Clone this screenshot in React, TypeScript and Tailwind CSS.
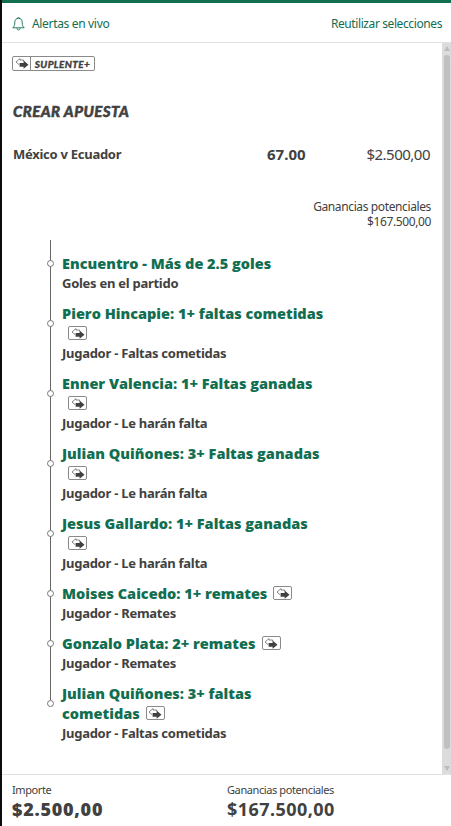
type Leg = {
    lines: string[];
    market: string;
    sub?: 'inline' | 'below';
};

const LEGS: Leg[] = [
    { lines: ['Encuentro - Más de 2.5 goles'], market: 'Goles en el partido' },
    { lines: ['Piero Hincapie: 1+ faltas cometidas'], market: 'Jugador - Faltas cometidas', sub: 'below' },
    { lines: ['Enner Valencia: 1+ Faltas ganadas'], market: 'Jugador - Le harán falta', sub: 'below' },
    { lines: ['Julian Quiñones: 3+ Faltas ganadas'], market: 'Jugador - Le harán falta', sub: 'below' },
    { lines: ['Jesus Gallardo: 1+ Faltas ganadas'], market: 'Jugador - Le harán falta', sub: 'below' },
    { lines: ['Moises Caicedo: 1+ remates'], market: 'Jugador - Remates', sub: 'inline' },
    { lines: ['Gonzalo Plata: 2+ remates'], market: 'Jugador - Remates', sub: 'inline' },
    { lines: ['Julian Quiñones: 3+ faltas', 'cometidas'], market: 'Jugador - Faltas cometidas', sub: 'inline' },
];

function SwapIcon() {
    return (
        <svg width="14" height="11" viewBox="0 0 14 11" className="block shrink-0">
            <path d="M8.6 3.2V2H5V.6L1 4l3 2.600" fill="none" stroke="#777" strokeWidth="0.9" />
            <path d="M4.600 4.900h4V2.600l4.900 4.100-4.900 4.100V8.700h-4z" fill="#414141" />
        </svg>
    );
}

function SubBadge() {
    return (
        <span className="ml-1.5 flex h-3.5 w-[19px] shrink-0 items-center justify-center rounded-[2px] border border-[#8a8a8a]">
            <SwapIcon />
        </span>
    );
}

function LegRow({ leg }: { leg: Leg }) {
    return (
        <li className="mb-2.5">
            <div className="relative font-['Open_Sans',sans-serif] text-[14.5px] leading-5 font-extrabold text-[#126e51]">
                <span className="absolute top-1/2 -left-[15px] -mt-[3px] h-[7px] w-[7px] rounded-full border border-[#777] bg-white" />
                {leg.lines.map((line, i) => (
                    <div key={line} className="flex h-5 items-center whitespace-nowrap">
                        <span className="pt-0.5">{line}</span>
                        {leg.sub === 'inline' && i === leg.lines.length - 1 && <SubBadge />}
                    </div>
                ))}
                {leg.sub === 'below' && (
                    <div className="flex h-5 items-center">
                        <SubBadge />
                    </div>
                )}
            </div>
            <p className="text-[13px] leading-5 font-bold tracking-[-0.27px]">{leg.market}</p>
        </li>
    );
}

export default function App() {
    return (
        <div className="flex h-[826px] w-[451px] flex-col overflow-hidden border-l-2 border-[#0c0c0c] bg-white font-['Noto_Sans','Open_Sans',sans-serif] text-[#414141]">
            {/* Header */}
            <header className="flex h-[43px] shrink-0 items-center justify-between border-t-3 border-b border-t-[#126e51] border-b-[#e2e2e2] pt-0.5 pr-[9px] pl-2.5 text-[12px] text-[#126e51]">
                <div className="flex items-center">
                    <svg width="13" height="14" viewBox="0 0 13 14" fill="none" stroke="#126e51" strokeWidth="0.9" className="mr-[7px]">
                        <path d="M5.4 1.6a1.1 1.1 0 0 1 2.2 0M6.5 1.3c-2.4 0-3.7 1.700-3.700 3.900 0 3.400-.8 4.300-2 5.600h11.400c-1.200-1.300-2-2.200-2-5.600 0-2.200-1.300-3.900-3.700-3.900z" />
                        <path d="M4.900 11.200c.2 2.400 3 2.400 3.200 0" />
                    </svg>
                    <span className="tracking-[-0.33px]">Alertas en vivo</span>
                </div>
                <span className="tracking-[-0.4px]">Reutilizar selecciones</span>
            </header>

            {/* Slip */}
            <div className="flex min-h-0 flex-1">
                <main className="min-w-0 flex-1 pt-[13px] pr-[11px] pl-[11px]">
                    <div className="-ml-px flex h-[15px] w-[83px] items-center rounded-[2px] border border-[#8a8a8a]">
                        <span className="flex h-full w-[18px] items-center justify-center border-r border-[#8a8a8a]">
                            <SwapIcon />
                        </span>
                        <span className="flex-1 text-center font-['Lato',sans-serif] text-[10px] leading-none font-black tracking-[0.35px] italic [-webkit-text-stroke:0.3px]">SUPLENTE+</span>
                    </div>

                    <h1 className="mt-[30px] font-['Lato',sans-serif] text-[15px] leading-5 font-black tracking-[0.45px] italic [-webkit-text-stroke:0.5px]">CREAR APUESTA</h1>

                    <div className="mt-[23px] flex h-5 items-center">
                        <span className="w-[254px] pt-0.5 text-[13px] font-bold tracking-[-0.27px]">México v Ecuador</span>
                        <span className="text-[15px] font-bold">67.00</span>
                        <span className="mr-px ml-auto text-[15px] tracking-[-0.5px]">$2.500,00</span>
                    </div>

                    <div className="mt-9 flex flex-col items-end gap-px text-[12px] leading-[14px] tracking-[-0.38px]">
                        <p>Ganancias potenciales</p>
                        <p>$167.500,00</p>
                    </div>

                    <div className="relative mt-[11px] ml-[37px] pt-[13px] pl-3">
                        <div className="absolute top-0 left-0 h-[460px] w-px bg-[#666]" />
                        <ul>
                            {LEGS.map((leg, i) => (
                                <LegRow key={i} leg={leg} />
                            ))}
                        </ul>
                    </div>
                </main>

                {/* Scrollbar */}
                <div className="flex w-[9px] shrink-0 flex-col items-center bg-[#dcdcdc] py-[3px]">
                    <div className="h-0 w-0 border-x-[3px] border-b-[5px] border-x-transparent border-b-[#bdbdbd]" />
                    <div className="mt-1 mb-[17px] w-1.5 flex-1 rounded-full bg-[#c0c0c0]" />
                    <div className="h-0 w-0 border-x-[3px] border-t-[5px] border-x-transparent border-t-[#bdbdbd]" />
                </div>
            </div>

            {/* Totals */}
            <footer className="flex h-[52px] shrink-0 border-t border-[#e2e2e2] pt-[7px] pl-2.5">
                <div className="w-[215px]">
                    <p className="text-[11px] leading-4 tracking-[-0.4px]">Importe</p>
                    <p className="text-[18px] leading-[22px] font-black tracking-[0.75px]">$2.500,00</p>
                </div>
                <div>
                    <p className="text-[11px] leading-4 tracking-[-0.4px]">Ganancias potenciales</p>
                    <p className="text-[18px] leading-[22px] font-bold tracking-[0.45px]">$167.500,00</p>
                </div>
            </footer>
        </div>
    );
}
